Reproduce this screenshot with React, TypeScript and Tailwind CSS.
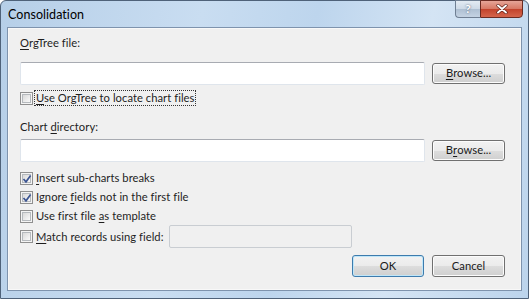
const font = { fontFamily: 'Lato, "Liberation Sans", sans-serif' };

function U({ children }: { children: string }) {
  return <span className="underline underline-offset-[2px]">{children}</span>;
}

function Checkbox({ checked }: { checked?: boolean }) {
  return (
    <span className="relative flex h-[13px] w-[13px] shrink-0 items-center justify-center border border-[#8f8f8f] bg-[#f4f4f4]">
      <span className="h-[9px] w-[9px] border border-[#b5b9bd] bg-gradient-to-br from-[#d9d9d9] to-[#fafafa]" />
      {checked && (
        <svg className="absolute left-[1px] top-[1px]" width="10" height="10" viewBox="0 0 10 10">
          <path d="M1.5 5 L4 7.8 L8.6 1.6" fill="none" stroke="#3c5592" strokeWidth="1.7" />
        </svg>
      )}
    </span>
  );
}

function CheckRow({ checked, focus, children }: { checked?: boolean; focus?: boolean; children: React.ReactNode }) {
  return (
    <div className="flex h-[16px] items-center whitespace-nowrap">
      <Checkbox checked={checked} />
      <span
        className={`ml-[2px] px-[1px] leading-[14px] ${focus ? 'outline outline-1 outline-dotted outline-[#333]' : ''}`}
      >
        {children}
      </span>
    </div>
  );
}

function Button({ children, primary, className = '' }: { children: React.ReactNode; primary?: boolean; className?: string }) {
  return (
    <div
      className={`flex h-[21px] items-center justify-center rounded-[3px] border ${
        primary ? 'border-[#3d7bad] shadow-[inset_0_0_0_1px_#bfe6f9]' : 'border-[#707070] shadow-[inset_0_0_0_1px_#fcfcfc]'
      } bg-[linear-gradient(#f2f2f2_0%,#ebebeb_50%,#dddddd_51%,#cfcfcf_100%)] text-[#1a1a1a] ${className}`}
    >
      {children}
    </div>
  );
}

function TextBox({ className = '' }: { className?: string }) {
  return (
    <div
      className={`h-[23px] rounded-[2px] border border-[#dfe5ec] border-t-[#a8abb2] bg-white ${className}`}
    />
  );
}

export default function App() {
  return (
    <div className="h-[299px] w-[529px] bg-white text-[11.2px] tracking-[0.05px] text-[#1e1e1e]" style={font}>
      <div className="flex h-[299px] w-[529px] flex-col rounded-t-[6px] border border-[#4f6279] bg-[linear-gradient(100deg,#b6cfe8_0%,#c9ddf1_35%,#bdd5ed_55%,#d4e4f4_75%,#bcd4ec_100%)]">
        <div className="flex h-[26px] shrink-0 items-start">
          <div className="pl-[7px] pt-[5px] text-[12.5px] text-black">Consolidation</div>
          <div className="ml-auto mr-[5px] -mt-px flex">
            <div className="flex h-[18px] w-[25px] items-center justify-center rounded-bl-[4px] border border-r-0 border-[#6f7f93] bg-[linear-gradient(#e3ebf3_0%,#cdd9e6_50%,#aebfd2_51%,#c4d3e3_100%)] text-[12px] font-bold leading-none text-white [text-shadow:0_0_2px_#43546a]">
              ?
            </div>
            <div className="flex h-[18px] w-[43px] items-center justify-center rounded-br-[4px] border border-[#6b2b22] bg-[linear-gradient(#e6a598_0%,#d77763_50%,#c2432c_51%,#d5654c_100%)]">
              <svg width="12" height="10" viewBox="0 0 12 10">
                <path d="M2 1.5 L10 8.5 M10 1.5 L2 8.5" stroke="#5a1c14" strokeWidth="3.2" strokeLinecap="round" />
                <path d="M2 1.5 L10 8.5 M10 1.5 L2 8.5" stroke="#ffffff" strokeWidth="1.9" strokeLinecap="round" />
              </svg>
            </div>
          </div>
        </div>

        <div className="mx-[6px] mb-[7px] flex flex-1 flex-col border border-[#7e93ad] bg-[#f0f0f0] pl-[12px] pr-[16px] shadow-[inset_0_0_0_1px_#f8f8f8]">
          <div className="mt-[7px] leading-[16px]">
            <U>O</U>rgTree file:
          </div>
          <div className="mt-[11px] flex items-center gap-[7px]">
            <TextBox className="flex-1" />
            <Button className="w-[73px]">
              <U>B</U>rowse...
            </Button>
          </div>
          <div className="mt-[5px]">
            <CheckRow focus>
              <U>U</U>se OrgTree to locate chart files
            </CheckRow>
          </div>
          <div className="mt-[13px] leading-[16px]">
            Chart <U>d</U>irectory:
          </div>
          <div className="mt-[4px] flex items-center gap-[7px]">
            <TextBox className="flex-1" />
            <Button className="w-[73px]">
              B<U>r</U>owse...
            </Button>
          </div>
          <div className="mt-[8px]">
            <CheckRow checked>
              <U>I</U>nsert sub-charts breaks
            </CheckRow>
          </div>
          <div className="mt-[3px]">
            <CheckRow checked>
              Ignore <U>f</U>ields not in the first file
            </CheckRow>
          </div>
          <div className="mt-[3px]">
            <CheckRow>
              Use first file <U>a</U>s template
            </CheckRow>
          </div>
          <div className="mt-[1px] flex items-center">
            <div className="w-[149px] shrink-0">
              <CheckRow>
                <U>M</U>atch records using field:
              </CheckRow>
            </div>
            <div className="h-[23px] w-[183px] rounded-[2px] border border-[#c9cdd2] bg-[#f0f0f0]" />
          </div>
          <div className="mt-[7px] flex justify-end gap-[8px]">
            <Button primary className="h-[22px] w-[72px]">
              OK
            </Button>
            <Button className="h-[22px] w-[73px]">Cancel</Button>
          </div>
        </div>
      </div>
    </div>
  );
}
